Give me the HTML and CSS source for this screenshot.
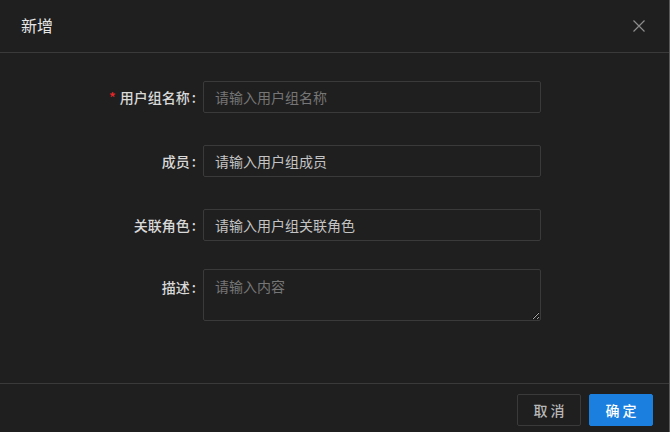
FILE: index.html
```html
<!DOCTYPE html>
<html lang="zh-CN">
<head>
    <meta charset="UTF-8">
    <meta name="viewport" content="width=device-width, initial-scale=1.0">
    <title>新增</title>
    <link rel="stylesheet" href="styles.css">
</head>
<body>

    <div class="modal">
        <div class="modal-header">
            <span class="modal-title">新增</span>
            <button class="modal-close" aria-label="关闭">
                <svg width="12" height="12" viewBox="0 0 12 12">
                    <path d="M0.5 0.5 L11.5 11.5 M11.5 0.5 L0.5 11.5" stroke="currentColor" stroke-width="1.2" fill="none"/>
                </svg>
            </button>
        </div>

        <div class="modal-body">
            <div class="form-row">
                <label class="form-label required">用户组名称</label>
                <input class="form-input" type="text" placeholder="请输入用户组名称">
            </div>
            <div class="form-row">
                <label class="form-label">成员</label>
                <div class="form-input select">请输入用户组成员</div>
            </div>
            <div class="form-row">
                <label class="form-label">关联角色</label>
                <div class="form-input select">请输入用户组关联角色</div>
            </div>
            <div class="form-row last">
                <label class="form-label">描述</label>
                <textarea class="form-input textarea" placeholder="请输入内容"></textarea>
            </div>
        </div>

        <div class="modal-footer">
            <button class="btn">取 消</button>
            <button class="btn primary">确 定</button>
        </div>
    </div>

</body>
</html>
```

FILE: styles.css
```css
* {
    box-sizing: border-box;
}
body {
    margin: 0;
    background-color: #1f1f1f;
    font-family: "Noto Sans CJK SC", "Noto Sans", sans-serif;
    font-size: 14px;
    color: #d9d9d9;
}
.modal {
    width: 670px;
    height: 432px;
    background-color: #1f1f1f;
    border-right: 1px solid #5a5a5a;
    display: flex;
    flex-direction: column;
}
.modal-header {
    height: 53px;
    padding: 0 24px 0 21px;
    display: flex;
    justify-content: space-between;
    align-items: center;
    border-bottom: 1px solid #3a3a3a;
}
.modal-title {
    font-size: 16px;
    color: #e6e6e6;
    line-height: 22px;
    margin-top: -2px;
}
.modal-close {
    background: none;
    border: none;
    padding: 0;
    color: #8c8c8c;
    display: flex;
    cursor: pointer;
    margin-top: -1px;
}
.modal-body {
    flex: 1;
    padding-top: 28px;
}
.form-row {
    display: flex;
    align-items: flex-start;
    margin-bottom: 32px;
}
.form-row.last {
    margin-top: -4px;
}
.form-label {
    width: 203px;
    height: 32px;
    padding-right: 7px;
    text-align: right;
    line-height: 32px;
    font-weight: 500;
    color: #d9d9d9;
    overflow: hidden;
}
.form-row.last .form-label {
    line-height: 36px;
}
.form-label::after {
    content: ":";
    margin-left: 2px;
}
.form-label.required::before {
    content: "*";
    color: #e8262a;
    margin-right: 4px;
}
.form-input {
    width: 338px;
    height: 32px;
    padding: 0 11px;
    background-color: #1f1f1f;
    border: 1px solid #3a3a3a;
    border-radius: 2px;
    font-family: inherit;
    font-size: 14px;
    color: #d9d9d9;
    outline: none;
}
.form-input::placeholder {
    color: #767676;
}
.select {
    line-height: 30px;
    color: #c4c4c4;
}
.textarea {
    height: 52px;
    padding: 5px 11px;
    line-height: 22px;
    resize: vertical;
}
.modal-footer {
    height: 49px;
    border-top: 1px solid #3a3a3a;
    display: flex;
    justify-content: flex-end;
    gap: 8px;
    padding: 10px 16px 0 0;
}
.btn {
    width: 64px;
    height: 32px;
    border: 1px solid #3a3a3a;
    border-radius: 2px;
    background-color: #1f1f1f;
    color: #b8b8b8;
    font-family: inherit;
    font-size: 14px;
    font-weight: 500;
    cursor: pointer;
}
.btn.primary {
    background-color: #1b7fe0;
    border-color: #1b7fe0;
    color: #ffffff;
}
```
